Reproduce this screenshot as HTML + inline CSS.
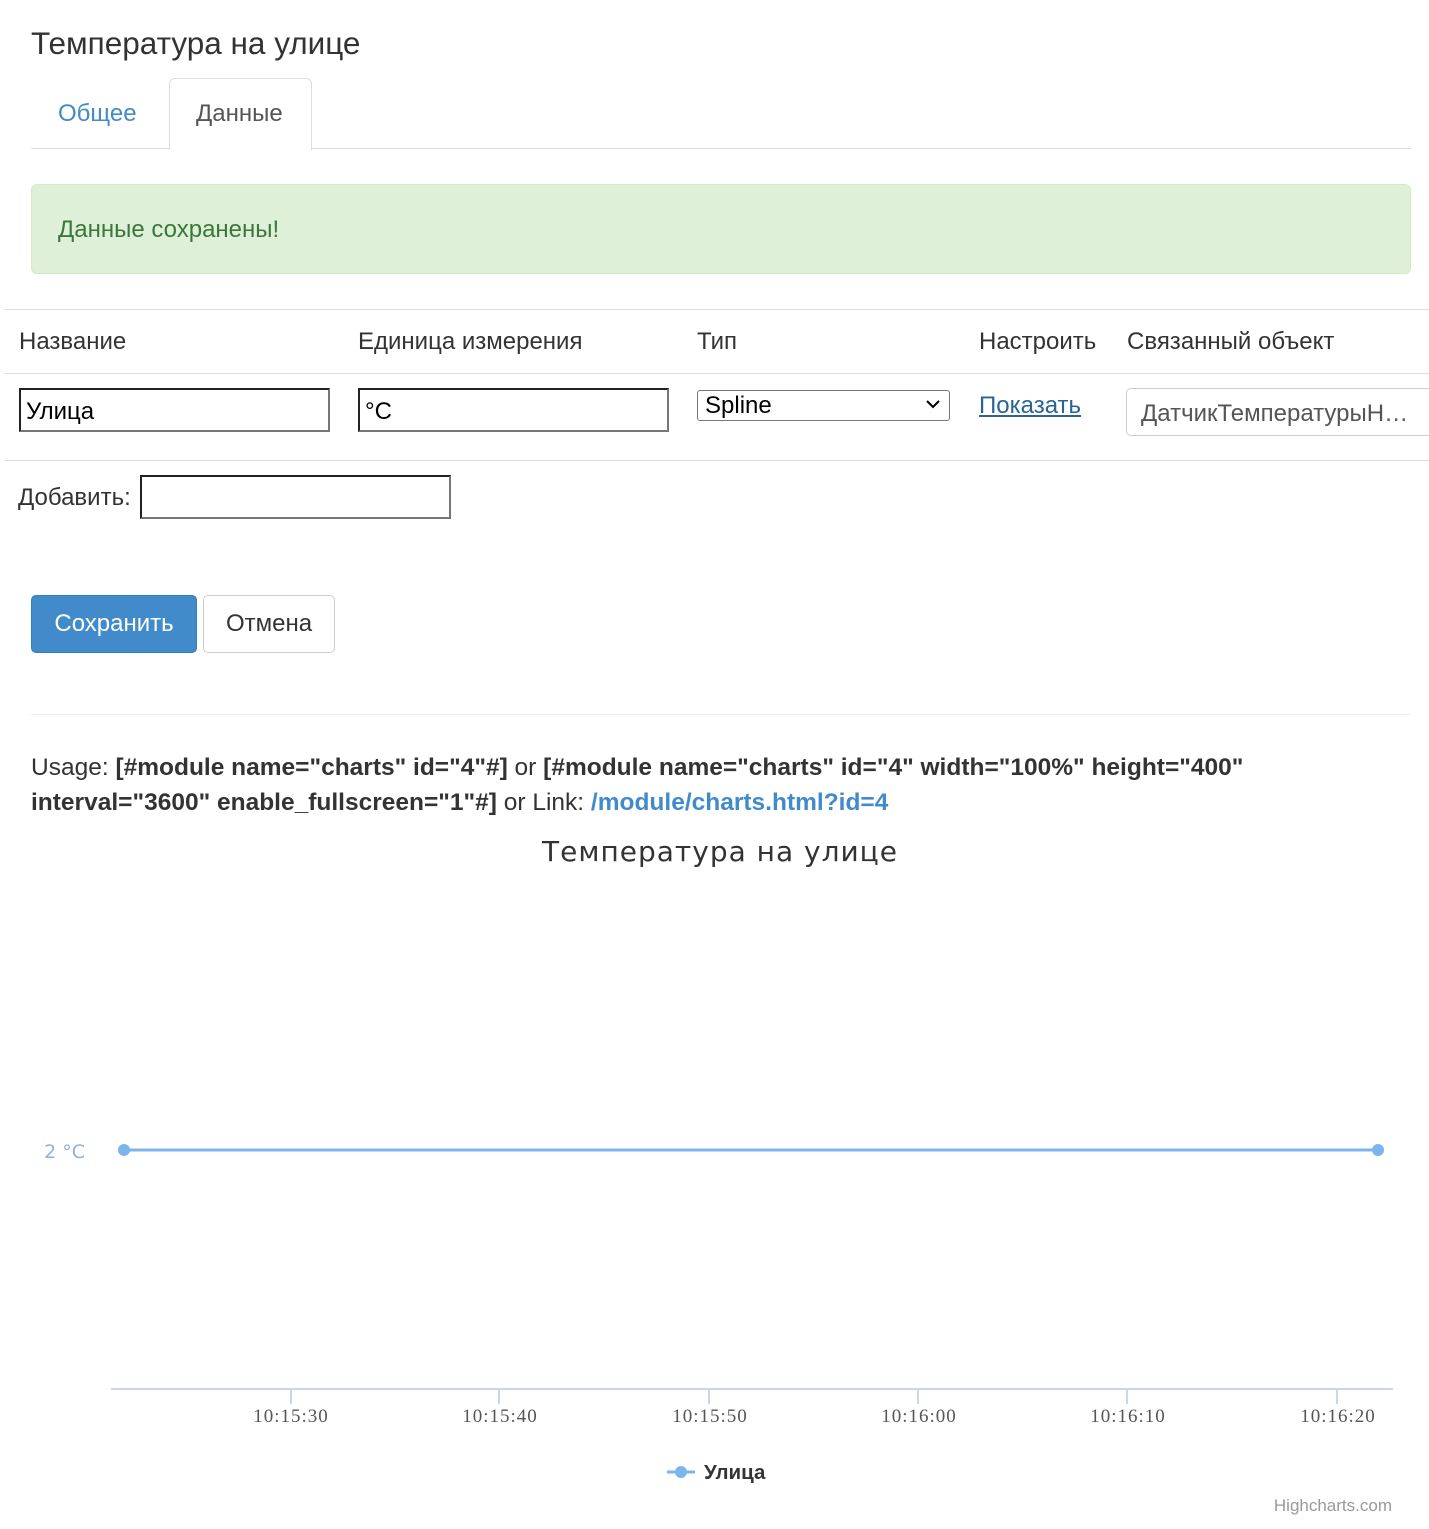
<!DOCTYPE html>
<html><head><meta charset="utf-8"><style>
body{margin:0;width:1429px;height:1529px;background:#fff;font-family:"Liberation Sans",sans-serif;color:#333;position:relative;overflow:hidden}
.a{position:absolute;white-space:nowrap}
.inp{position:absolute;box-sizing:border-box;border:2px solid #767676;border-top-color:#222;border-left-color:#222;height:44px;font-size:24px;padding:8px 5px;color:#000}
.hr{position:absolute;height:1px;background:#ddd}
</style></head><body>
<div class="a" style="left:31px;top:25px;font-size:31.5px;color:#333">Температура на улице</div>
<div class="hr" style="left:31px;top:148px;width:1380px"></div>
<div class="a" style="left:58px;top:100px;font-size:24px;color:#428bca">Общее</div>
<div class="a" style="left:169px;top:78px;width:141px;height:71px;border:1px solid #ddd;border-bottom:none;border-radius:6px 6px 0 0;background:#fff"></div>
<div class="a" style="left:196px;top:100px;font-size:24px;color:#555">Данные</div>
<div class="a" style="left:31px;top:184px;width:1378px;height:88px;background:#dff0d8;border:1px solid #d6e9c6;border-radius:6px"></div>
<div class="a" style="left:58px;top:216px;font-size:24px;color:#3c763d">Данные сохранены!</div>
<div class="hr" style="left:5px;top:309px;width:1424px"></div>
<div class="a" style="left:19px;top:328px;font-size:24px">Название</div>
<div class="a" style="left:358px;top:328px;font-size:24px">Единица измерения</div>
<div class="a" style="left:697px;top:328px;font-size:24px">Тип</div>
<div class="a" style="left:979px;top:328px;font-size:24px">Настроить</div>
<div class="a" style="left:1127px;top:328px;font-size:24px">Связанный объект</div>
<div class="hr" style="left:5px;top:373px;width:1424px"></div>
<div class="inp" style="left:19px;top:388px;width:311px">Улица</div>
<div class="inp" style="left:358px;top:388px;width:311px">°C</div>
<div class="a" style="left:697px;top:390px;width:253px;height:31px;box-sizing:border-box;border:1px solid #767676;border-radius:3px;font-size:24px;padding:1px 7px;color:#000">Spline<svg style="position:absolute;right:9px;top:9px" width="14" height="9"><path d="M1 1 L7 7 L13 1" fill="none" stroke="#000" stroke-width="2"/></svg></div>
<div class="a" style="left:979px;top:392px;font-size:24px;color:#2a6496;text-decoration:underline">Показать</div>
<div class="a" style="left:1126px;top:388px;width:320px;height:48px;box-sizing:border-box;border:1px solid #ccc;border-radius:5px;font-size:24px;padding:11px 14px;color:#555">ДатчикТемпературыН…</div>
<div class="hr" style="left:5px;top:460px;width:1424px"></div>
<div class="a" style="left:18px;top:484px;font-size:24px">Добавить:</div>
<div class="inp" style="left:140px;top:475px;width:311px"></div>
<div class="a" style="left:31px;top:595px;width:166px;height:58px;background:#428bca;border:1px solid #357ebd;border-radius:5px;box-sizing:border-box;color:#fff;font-size:24px;text-align:center;line-height:56px">Сохранить</div>
<div class="a" style="left:203px;top:595px;width:132px;height:58px;background:#fff;border:1px solid #ccc;border-radius:5px;box-sizing:border-box;color:#333;font-size:24px;text-align:center;line-height:56px">Отмена</div>
<div class="hr" style="left:31px;top:714px;width:1380px;background:#eee"></div>
<div class="a" style="left:31px;top:750px;font-size:24.5px;line-height:35px">Usage: <b>[#module name="charts" id="4"#]</b> or <b>[#module name="charts" id="4" width="100%" height="400"</b><br><b>interval="3600" enable_fullscreen="1"#]</b> or Link: <b style="color:#428bca">/module/charts.html?id=4</b></div>
<svg class="a" style="left:0;top:820px" width="1429" height="709" font-family="DejaVu Sans,sans-serif">
<text x="720" y="41" text-anchor="middle" font-size="28" fill="#333" letter-spacing="1">Температура на улице</text>
<text x="85" y="338" text-anchor="end" font-size="19" fill="#8fb1dc">2 °C</text>
<line x1="124" y1="330" x2="1378" y2="330" stroke="#7cb5ec" stroke-width="3"/>
<circle cx="124" cy="330" r="6" fill="#7cb5ec"/><circle cx="1378" cy="330" r="6" fill="#7cb5ec"/>
<line x1="111" y1="569" x2="1393" y2="569" stroke="#ccd6eb" stroke-width="2"/>
<g stroke="#ccd6eb" stroke-width="2"><line x1="291" y1="569" x2="291" y2="584"/><line x1="499" y1="569" x2="499" y2="584"/><line x1="709" y1="569" x2="709" y2="584"/><line x1="918" y1="569" x2="918" y2="584"/><line x1="1127" y1="569" x2="1127" y2="584"/><line x1="1337" y1="569" x2="1337" y2="584"/></g>
<g font-size="19" fill="#555" text-anchor="middle" font-family="Liberation Serif,serif" letter-spacing="1"><text x="291" y="602">10:15:30</text><text x="500" y="602">10:15:40</text><text x="710" y="602">10:15:50</text><text x="919" y="602">10:16:00</text><text x="1128" y="602">10:16:10</text><text x="1338" y="602">10:16:20</text></g>
<line x1="667" y1="652" x2="695" y2="652" stroke="#7cb5ec" stroke-width="3"/><circle cx="681" cy="652" r="6" fill="#7cb5ec"/>
<text x="704" y="659" font-size="20.5" font-weight="bold" fill="#333" font-family="Liberation Sans,sans-serif">Улица</text>
<text x="1392" y="691" text-anchor="end" font-size="17" fill="#999" font-family="Liberation Sans,sans-serif">Highcharts.com</text>
</svg>
</body></html>
